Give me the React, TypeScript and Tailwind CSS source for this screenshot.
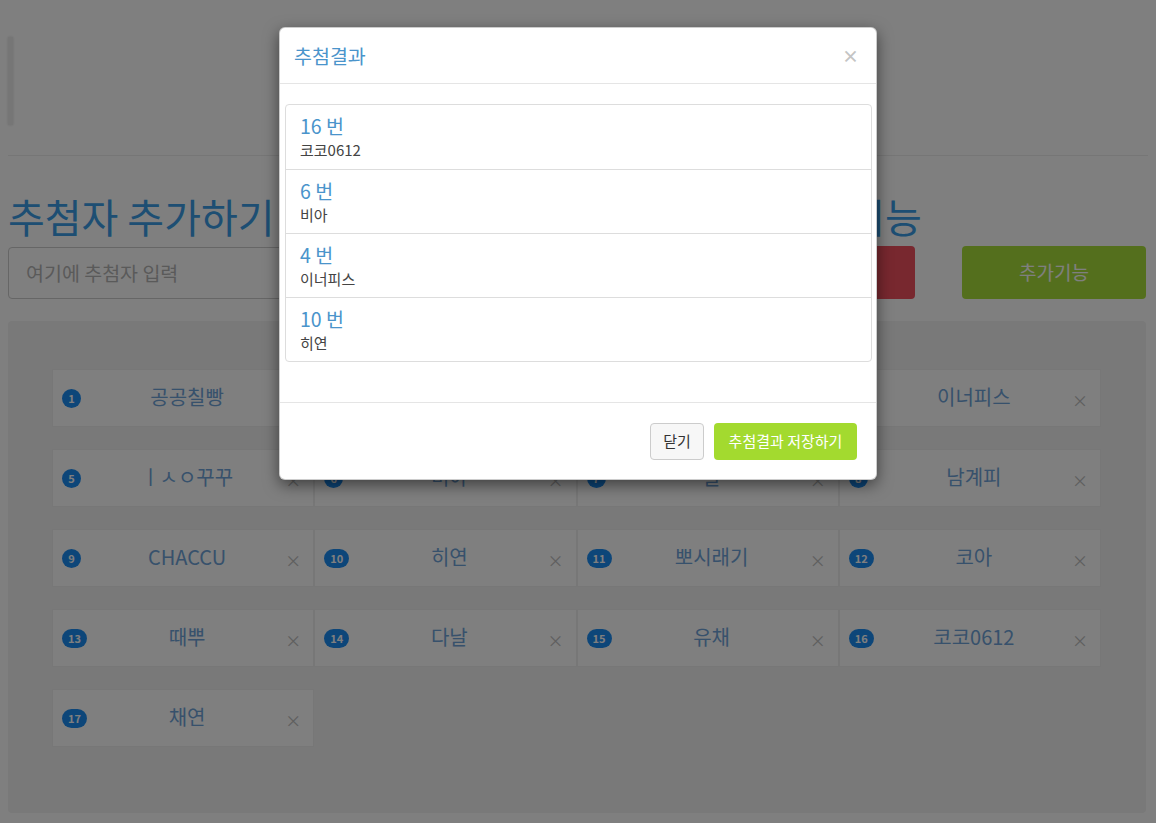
import React from "react";

const FONT = "font-['Noto_Sans_CJK_KR','Noto_Sans',sans-serif]";

const entries: string[] = [
  "공공칠빵",
  "하늘",
  "별",
  "이너피스",
  "ㅣㅅㅇ꾸꾸",
  "비아",
  "달",
  "남계피",
  "CHACCU",
  "히연",
  "뽀시래기",
  "코아",
  "때뿌",
  "다날",
  "유채",
  "코코0612",
  "채연",
];

const results: { n: number; name: string }[] = [
  { n: 16, name: "코코0612" },
  { n: 6, name: "비아" },
  { n: 4, name: "이너피스" },
  { n: 10, name: "히연" },
];

function Card({ idx, name }: { idx: number; name: string }) {
  const two = idx >= 10;
  return (
    <div className="relative h-[58px] bg-[#fefefe] border border-[#eeeeee] flex items-center">
      <span
        className={`absolute left-[9px] top-[19px] h-[19px] ${
          two ? "w-[25px]" : "w-[19px]"
        } rounded-full bg-[#1b8cf2] text-white text-[11px] font-bold leading-[19px] text-center`}
      >
        {idx}
      </span>
      <span className="flex-1 text-center text-[20px] leading-[26px] text-[#6ea3d8] pl-[8px] mb-[2px]">
        {name}
      </span>
      <span className="absolute right-[12px] top-[20px] text-[16px] leading-[20px] text-[#bdbdbd]">
        ×
      </span>
    </div>
  );
}

export default function App() {
  return (
    <div className={`${FONT} relative w-[1156px] h-[823px] overflow-hidden bg-white`}>
      {/* underlying page */}
      <div className="pl-[8px] pr-[10px] pt-[37px]">
        <div className="h-[88px] w-[5px] bg-[#ececec] shadow-[0_0_3px_rgba(0,0,0,0.15)]" />
        <div className="mt-[30px] h-px bg-[#ececec] mr-[-2px]" />
        <div className="mt-[38px] flex items-end h-[44px]">
          <h1 className="text-[40px] leading-[44px] text-[#3a9de6] font-normal">추첨자 추가하기</h1>
          <h1 className="ml-[500px] text-[40px] leading-[44px] text-[#3a9de6] font-normal">추가기능</h1>
        </div>
        <div className="mt-[8px] flex items-center h-[53px]">
          <div className="w-[782px] h-[52px] rounded-[4px] border border-[#cccccc] flex items-center pl-[17px] text-[19.5px] text-[#b4b4b4]">
            여기에 추첨자 입력
          </div>
          <div className="ml-[10px] w-[115px] h-[53px] rounded-[4px] bg-[#f0505f] flex items-center justify-center text-white text-[19px]">
            추가
          </div>
          <div className="ml-[47px] flex-1 h-[53px] rounded-[4px] bg-[#a9df3b] flex items-center justify-center text-white text-[19px]">
            추가기능
          </div>
        </div>
        <div className="mt-[22px] h-[492px] rounded-[4px] bg-[#f3f3f3] pl-[44px] pr-[45px] pt-[48px]">
          <div className="grid grid-cols-4 gap-y-[22px]">
            {entries.map((name, i) => (
              <Card key={i} idx={i + 1} name={name} />
            ))}
          </div>
        </div>
      </div>

      {/* backdrop */}
      <div className="absolute inset-0 bg-black/50" />

      {/* modal */}
      <div className="absolute inset-0 flex justify-center pt-[27px]">
        <div className="w-[598px] h-[453px] bg-white rounded-[6px] border border-black/20 shadow-[0_5px_15px_rgba(0,0,0,0.5)] flex flex-col">
          <div className="h-[56px] border-b border-[#e5e5e5] flex items-center justify-between pl-[14px] pr-[17px]">
            <span className="text-[19.5px] leading-[24px] text-[#4a94cb]">추첨결과</span>
            <span className="text-[17px] leading-[17px] font-bold text-[#c4c4c4]">×</span>
          </div>
          <div className="pt-[20px] pl-[5px] pr-[4px] h-[318px]">
            <div className="border border-[#dddddd] rounded-[4px]">
              {results.map((r, i) => (
                <div
                  key={i}
                  className={`h-[64px] pl-[14px] pt-[8px] ${i > 0 ? "border-t border-[#dddddd]" : ""}`}
                >
                  <div className="text-[19.5px] leading-[26px] text-[#4a94cb]">{r.n} 번</div>
                  <div className="text-[15px] leading-[20px] text-[#444444] mt-[1px]">{r.name}</div>
                </div>
              ))}
            </div>
          </div>
          <div className="border-t border-[#e5e5e5] flex-1 flex items-start justify-end pt-[20px] pr-[19px] gap-[10px]">
            <div className="h-[37px] w-[54px] rounded-[4px] border border-[#cccccc] bg-[#f7f7f7] flex items-center justify-center text-[15px] text-[#333333]">
              닫기
            </div>
            <div className="h-[37px] w-[143px] rounded-[4px] bg-[#a3da2f] flex items-center justify-center text-[15px] text-white">
              추첨결과 저장하기
            </div>
          </div>
        </div>
      </div>
    </div>
  );
}
